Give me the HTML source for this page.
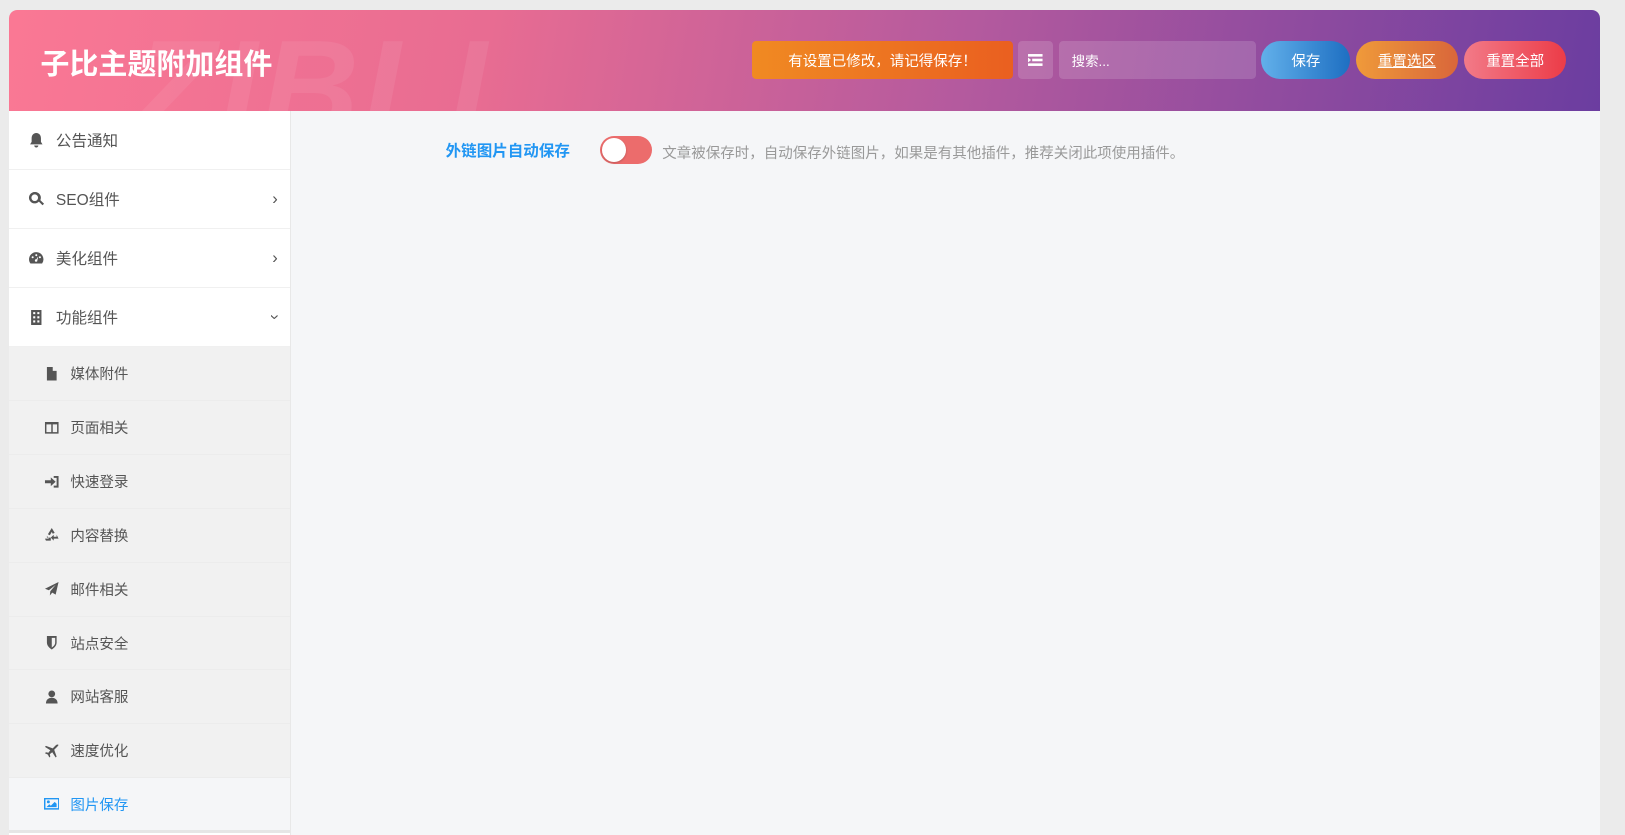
<!DOCTYPE html>
<html><head><meta charset="utf-8"><style>
*{box-sizing:border-box;margin:0;padding:0}
html,body{width:1625px;height:835px;overflow:hidden}
body{background:#ebebeb;font-family:"Liberation Sans","Noto Sans CJK SC",sans-serif;position:relative}
.root{position:absolute;left:0;top:0;width:1568px;height:806px;zoom:1.0364}
.wrap{position:absolute;left:9px;top:10px;width:1535px;height:800px;background:#f5f6f8;border-radius:8px 8px 0 0;overflow:hidden}
.hdr{position:absolute;left:0;top:0;width:1535px;height:97px;background:linear-gradient(100deg,#fa7894 0%,#e86c92 30%,#b45a9e 60%,#6b3da0 100%);overflow:hidden}
.wm{position:absolute;left:120px;top:0px;font:italic 900 130px "Liberation Sans",sans-serif;color:rgba(255,255,255,.07);letter-spacing:4px}
.title{position:absolute;left:30px;top:30px;color:#fff;font-size:28px;font-weight:bold}
.b{position:absolute;top:30px;height:36px;color:#fff;font-size:14px;display:flex;align-items:center;justify-content:center;border-radius:4px}
.side{position:absolute;left:0;top:97px;width:272px;height:710px;background:#fff;border-right:1px solid #e8e8e8}
.it{height:57px;border-bottom:1px solid #f0f0f0;display:flex;align-items:center;padding-left:18px;font-size:15px;color:#555;position:relative}
.it svg{width:16px;height:16px;margin-right:11px;fill:#555}
.ch{position:absolute;right:12px;font-size:16px;color:#555}
.sub{background:#f1f1f1}
.si{height:52px;border-bottom:1px solid #ececec;display:flex;align-items:center;padding-left:33px;font-size:14px;color:#555}
.si svg{width:15px;height:15px;margin-right:11px;fill:#555}
.act{background:#f5f6f8;color:#2196f3}
.act svg{fill:#2196f3}
</style></head><body><div class="root">
<div class="wrap">
<div class="hdr">
<div class="wm">ZIBLL</div>
<div class="title">子比主题附加组件</div>
<div class="b" style="left:717px;width:251px;background:linear-gradient(90deg,#f08a22,#ea5f20)">有设置已修改，请记得保存！</div>
<div class="b" style="left:973px;width:34px;background:rgba(255,255,255,.15)"><svg width="16" height="14" viewBox="0 0 16 14" fill="#fff"><rect x="1" y="1" width="14" height="2.5"/><rect x="5" y="5.5" width="10" height="2.5"/><rect x="1" y="10" width="14" height="2.5"/><path d="M1 4.5l3 2.3-3 2.3z"/></svg></div>
<div class="b" style="left:1013px;width:190px;background:rgba(255,255,255,.15);justify-content:flex-start;padding-left:12px;font-size:13px">搜索...</div>
<div class="b" style="left:1208px;width:86px;border-radius:19px;background:linear-gradient(90deg,#62b0ea,#1e6fc2)">保存</div>
<div class="b" style="left:1299px;width:99px;border-radius:19px;background:linear-gradient(90deg,#ef9a3a,#d9663a);text-decoration:underline">重置选区</div>
<div class="b" style="left:1404px;width:98px;border-radius:19px;background:linear-gradient(90deg,#f27a88,#ec3c48)">重置全部</div>
</div>
<div class="side">
<div class="it"><svg viewBox="0 0 16 16"><path d="M8 1c-3 0-4.5 2.5-4.5 5v3.5L2 12h12l-1.5-2.5V6C12.5 3.5 11 1 8 1zM6 13a2 2 0 004 0z"/></svg>公告通知</div>
<div class="it"><svg viewBox="0 0 16 16"><path d="M6.5 1a5.5 5.5 0 104 9.2l3.5 3.6 1.5-1.5-3.6-3.5A5.5 5.5 0 006.5 1zm0 2.3a3.2 3.2 0 110 6.4 3.2 3.2 0 010-6.4z"/></svg>SEO组件<span class="ch">›</span></div>
<div class="it"><svg viewBox="0 0 16 16"><path d="M8 2a7 7 0 00-7 7c0 1.6.5 3 1.4 4h11.2A7 7 0 008 2zm0 2a1 1 0 110 2 1 1 0 010-2zm-3.5 2a1 1 0 110 2 1 1 0 010-2zm7 0a1 1 0 110 2 1 1 0 010-2zM8 9l2-3-1 4a1.2 1.2 0 11-1-1z"/></svg>美化组件<span class="ch">›</span></div>
<div class="it"><svg viewBox="0 0 16 16"><path d="M3 1h10v15H3zM5 3v2h2V3zm4 0v2h2V3zM5 7v2h2V7zm4 0v2h2V7zm-4 4v2h2v-2zm4 0v2h2v-2z" fill-rule="evenodd"/></svg>功能组件<span class="ch" style="transform:rotate(90deg)">›</span></div>
<div class="sub">
<div class="si"><svg viewBox="0 0 16 16"><path d="M3 1h6l4 4v10H3zM9 1v4h4z"/></svg>媒体附件</div>
<div class="si"><svg viewBox="0 0 16 16"><path d="M1 2h14v12H1zm1.5 2.5v8h5v-8zm6.5 0v8h4.5v-8z" fill-rule="evenodd"/></svg>页面相关</div>
<div class="si"><svg viewBox="0 0 16 16"><path d="M1 6.5h6V3.5l5 4.5-5 4.5v-3H1zM10 2h5v12h-5v-2h3V4h-3z"/></svg>快速登录</div>
<div class="si"><svg viewBox="0 0 16 16"><path d="M8 1l3 5-2 1-1-2-2 3.5-2-1zM13 8l2 4h-5v2l-3-3 3-3v2h3zM3 9l2 3H1l1 2h5v-3H3z"/></svg>内容替换</div>
<div class="si"><svg viewBox="0 0 16 16"><path d="M15 1L1 8l4 1.5L12 4 6.5 10.5 6 15l2.5-3 3.5 2z"/></svg>邮件相关</div>
<div class="si"><svg viewBox="0 0 16 16"><path d="M3 1h10v7c0 4-5 7-5 7S3 12 3 8zm5 2v10c2-1.5 3.5-3 3.5-5V3z" fill-rule="evenodd"/></svg>站点安全</div>
<div class="si"><svg viewBox="0 0 16 16"><circle cx="8" cy="5" r="3.5"/><path d="M2 15c0-4 2.5-6 6-6s6 2 6 6z"/></svg>网站客服</div>
<div class="si"><svg viewBox="0 0 16 16"><path d="M15 2c-1-1-2.5 0-3.5 1L9 5.5 2 3 1 4l5.5 3.5L4.5 10 2 9.5 1 10.5l3 1.5 1.5 3 1-1-.5-2.5 2.5-2L12 15l1-1-2.5-7 2.5-2.5c1-1 2-2.5 2-2.5z"/></svg>速度优化</div>
</div>
<div class="si act" style="height:50px;border:0"><svg viewBox="0 0 16 16"><path d="M0 2h16v12H0zm1.5 1.5v9h13v-9zM4.5 4.5a1.5 1.5 0 110 3 1.5 1.5 0 010-3zM2.5 11.5l3-3 1.5 1.5 4-4 2 2v3.5z" fill-rule="evenodd"/></svg>图片保存</div>
<div style="height:3px;background:#e6e6e6"></div>
</div>
<div style="position:absolute;left:421px;top:124px;color:#2196f3;font-size:15px;font-weight:bold">外链图片自动保存</div>
<div style="position:absolute;left:570px;top:121px;width:50px;height:27px;border-radius:14px;background:#ec6c6c"><div style="position:absolute;left:2px;top:2px;width:23px;height:23px;border-radius:50%;background:#fff;box-shadow:0 1px 2px rgba(0,0,0,.2)"></div></div>
<div style="position:absolute;left:630px;top:127px;color:#999;font-size:14px">文章被保存时，自动保存外链图片，如果是有其他插件，推荐关闭此项使用插件。</div>
</div>
</div></body></html>
